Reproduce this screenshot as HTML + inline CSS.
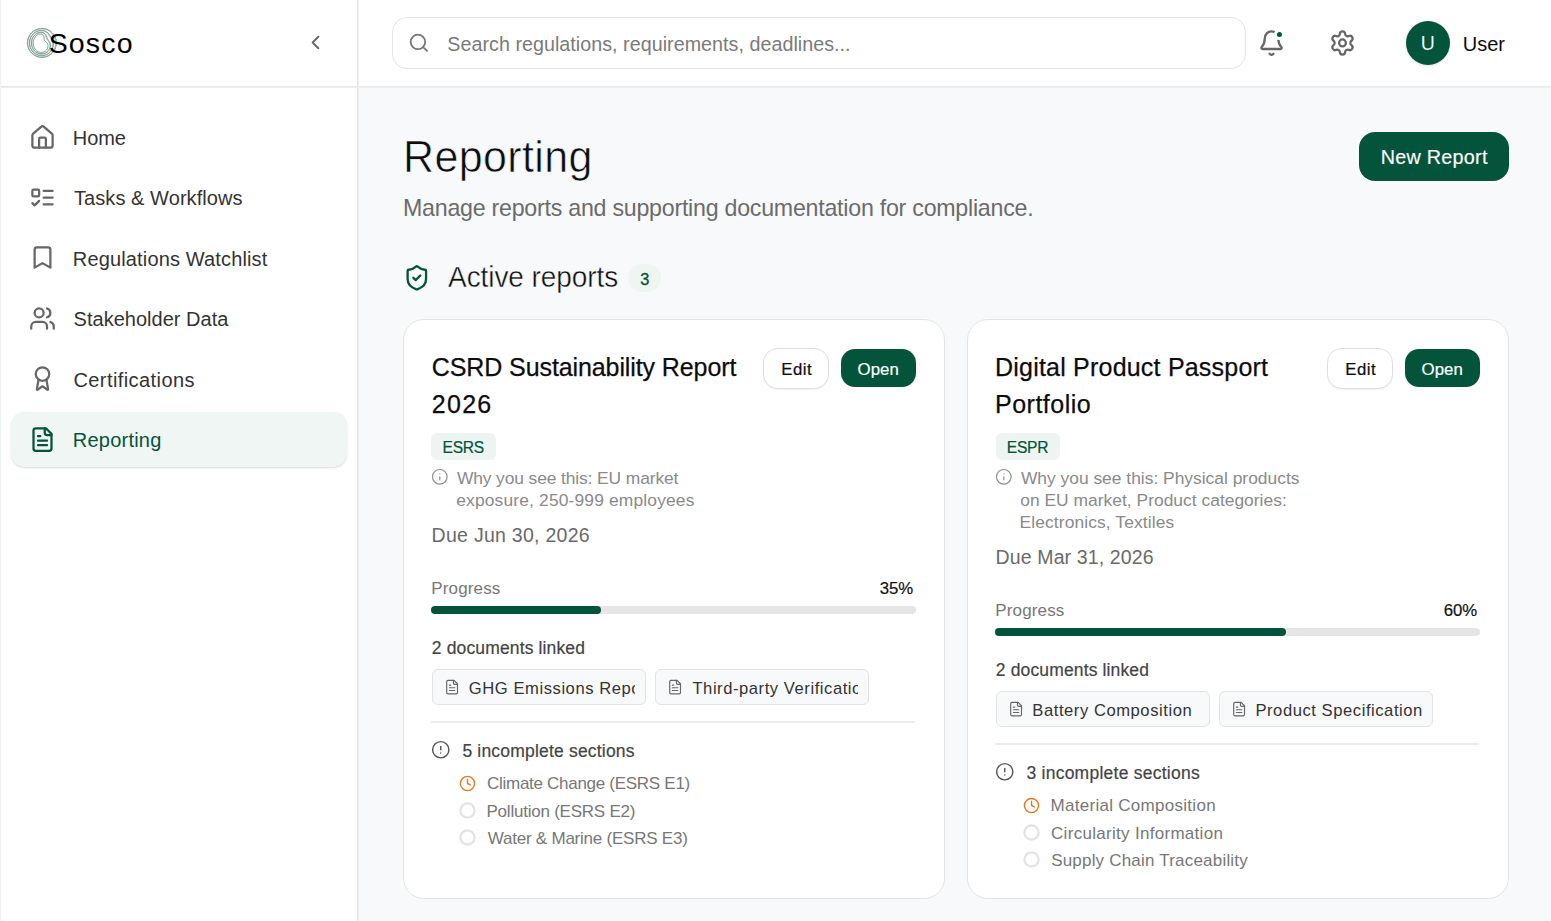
<!DOCTYPE html>
<html><head><meta charset="utf-8"><title>Reporting</title>
<style>
html,body{margin:0;padding:0;}
body{width:1551px;height:921px;overflow:hidden;position:relative;font-family:"Liberation Sans",sans-serif;background:#f8f9fb;}
.t{position:absolute;white-space:nowrap;}
.b{position:absolute;}
.i{position:absolute;overflow:visible;}
.b .t, .b .i{position:absolute;}
</style></head><body>
<div class="b" style="left:0px;top:0px;width:1551px;height:921px;background:#f8f9fb"></div>
<div class="b" style="left:0px;top:0px;width:357px;height:921px;background:#ffffff"></div>
<div class="b" style="left:358px;top:0px;width:1193px;height:86px;background:#ffffff"></div>
<div class="b" style="left:357px;top:0px;width:1px;height:921px;background:#e6e6e4"></div>
<div class="b" style="left:358px;top:0px;width:1px;height:86px;background:#eef2f0"></div>
<div class="b" style="left:358px;top:88px;width:1px;height:833px;background:#eeeeed"></div>
<div class="b" style="left:0px;top:86px;width:1551px;height:1px;background:#e8e8e6"></div>
<div class="b" style="left:0px;top:87px;width:1551px;height:1px;background:#eeeeec"></div>
<div class="b" style="left:0px;top:0px;width:1px;height:921px;background:#eef3f1"></div>
<svg class="i" style="left:26px;top:26px" width="32" height="32" viewBox="0 0 32 32" fill="none" stroke-width="0.7" stroke-linejoin="round"><path d="M30.40 16.90 L30.34 18.16 L30.18 19.42 L29.91 20.65 L29.53 21.86 L29.04 23.03 L28.46 24.15 L27.78 25.22 L27.01 26.22 L26.15 27.15 L25.22 28.01 L24.22 28.78 L23.15 29.46 L22.03 30.04 L20.86 30.53 L19.65 30.91 L18.42 31.18 L17.16 31.34 L15.90 31.40 L14.64 31.34 L13.38 31.18 L12.15 30.91 L10.94 30.53 L9.77 30.04 L8.65 29.46 L7.58 28.78 L6.58 28.01 L5.65 27.15 L4.79 26.22 L4.02 25.22 L3.34 24.15 L2.76 23.03 L2.27 21.86 L1.89 20.65 L1.62 19.42 L1.46 18.16 L1.40 16.90 L1.46 15.64 L1.62 14.38 L1.89 13.15 L2.27 11.94 L2.76 10.77 L3.34 9.65 L4.02 8.58 L4.79 7.58 L5.65 6.65 L6.58 5.79 L7.58 5.02 L8.65 4.34 L9.77 3.76 L10.94 3.27 L12.15 2.89 L13.38 2.62 L14.64 2.46 L15.90 2.40 L17.16 2.46 L18.42 2.62 L19.65 2.89 L20.86 3.27 L22.03 3.76 L23.15 4.34 L24.22 5.02 L25.22 5.79 L26.15 6.65 L27.01 7.58 L27.78 8.58 L28.46 9.65 L29.04 10.77 L29.53 11.94 L29.91 13.15 L30.18 14.38 L30.34 15.64Z" stroke="#2f7d62"/><path d="M29.75 16.91 L29.73 18.14 L29.59 19.37 L29.35 20.57 L29.00 21.76 L28.54 22.91 L27.98 24.01 L27.33 25.06 L26.58 26.04 L25.75 26.95 L24.84 27.79 L23.87 28.53 L22.83 29.19 L21.74 29.75 L20.61 30.22 L19.44 30.58 L18.24 30.84 L17.03 31.00 L15.81 31.05 L14.59 30.99 L13.38 30.83 L12.19 30.56 L11.02 30.19 L9.89 29.71 L8.81 29.14 L7.78 28.48 L6.81 27.73 L5.91 26.90 L5.08 25.99 L4.34 25.01 L3.69 23.98 L3.12 22.88 L2.65 21.74 L2.29 20.57 L2.02 19.37 L1.86 18.14 L1.81 16.91 L1.86 15.68 L2.02 14.46 L2.29 13.26 L2.65 12.08 L3.12 10.95 L3.69 9.85 L4.34 8.81 L5.08 7.84 L5.91 6.93 L6.81 6.10 L7.78 5.35 L8.81 4.68 L9.89 4.12 L11.02 3.64 L12.19 3.27 L13.38 3.01 L14.59 2.85 L15.81 2.80 L17.03 2.85 L18.24 3.02 L19.43 3.30 L20.59 3.68 L21.70 4.17 L22.77 4.76 L23.78 5.45 L24.72 6.22 L25.59 7.07 L26.39 7.99 L27.11 8.96 L27.75 9.99 L28.31 11.05 L28.79 12.16 L29.18 13.31 L29.47 14.49 L29.67 15.69Z" stroke="#8f9893"/><path d="M27.25 16.97 L27.35 18.06 L27.33 19.17 L27.20 20.27 L26.95 21.37 L26.60 22.44 L26.14 23.46 L25.58 24.44 L24.93 25.34 L24.20 26.18 L23.39 26.93 L22.52 27.59 L21.60 28.16 L20.63 28.64 L19.63 29.03 L18.61 29.33 L17.57 29.53 L16.51 29.65 L15.46 29.68 L14.40 29.61 L13.36 29.46 L12.33 29.21 L11.33 28.87 L10.36 28.45 L9.42 27.94 L8.54 27.34 L7.70 26.67 L6.92 25.92 L6.21 25.11 L5.57 24.23 L5.01 23.30 L4.52 22.32 L4.12 21.30 L3.80 20.25 L3.57 19.17 L3.43 18.07 L3.39 16.97 L3.43 15.86 L3.57 14.77 L3.80 13.69 L4.12 12.64 L4.52 11.62 L5.01 10.64 L5.57 9.70 L6.21 8.83 L6.92 8.01 L7.70 7.27 L8.54 6.59 L9.42 6.00 L10.36 5.49 L11.33 5.07 L12.33 4.74 L13.36 4.50 L14.41 4.36 L15.46 4.32 L16.51 4.38 L17.55 4.56 L18.56 4.84 L19.53 5.24 L20.46 5.76 L21.32 6.38 L22.10 7.09 L22.80 7.88 L23.43 8.71 L23.99 9.57 L24.51 10.43 L25.01 11.28 L25.48 12.14 L25.94 13.02 L26.37 13.94 L26.74 14.90 L27.05 15.91Z" stroke="#2f7d62"/><path d="M26.61 16.98 L26.74 18.04 L26.75 19.11 L26.64 20.20 L26.42 21.27 L26.09 22.31 L25.66 23.32 L25.13 24.28 L24.50 25.16 L23.80 25.98 L23.02 26.71 L22.17 27.35 L21.28 27.90 L20.35 28.36 L19.38 28.72 L18.39 29.00 L17.39 29.20 L16.38 29.30 L15.37 29.32 L14.36 29.26 L13.36 29.10 L12.37 28.86 L11.41 28.53 L10.48 28.12 L9.58 27.62 L8.73 27.05 L7.93 26.39 L7.19 25.67 L6.50 24.88 L5.89 24.03 L5.35 23.13 L4.88 22.17 L4.50 21.18 L4.19 20.16 L3.97 19.12 L3.84 18.05 L3.80 16.98 L3.84 15.91 L3.97 14.85 L4.19 13.80 L4.50 12.78 L4.88 11.79 L5.35 10.84 L5.89 9.94 L6.51 9.08 L7.19 8.29 L7.93 7.57 L8.73 6.92 L9.58 6.34 L10.48 5.85 L11.41 5.44 L12.37 5.12 L13.36 4.89 L14.36 4.75 L15.37 4.72 L16.37 4.78 L17.37 4.96 L18.33 5.24 L19.26 5.65 L20.14 6.17 L20.94 6.80 L21.66 7.52 L22.30 8.31 L22.87 9.14 L23.37 9.98 L23.84 10.80 L24.29 11.62 L24.75 12.43 L25.20 13.25 L25.64 14.10 L26.04 15.01 L26.37 15.97Z" stroke="#8f9893"/><path d="M24.11 17.04 L24.36 17.95 L24.49 18.91 L24.50 19.89 L24.38 20.88 L24.15 21.84 L23.82 22.77 L23.38 23.66 L22.85 24.47 L22.24 25.20 L21.56 25.85 L20.83 26.41 L20.05 26.87 L19.24 27.25 L18.41 27.54 L17.57 27.75 L16.72 27.89 L15.87 27.96 L15.02 27.95 L14.17 27.88 L13.34 27.73 L12.52 27.52 L11.72 27.22 L10.94 26.86 L10.20 26.42 L9.49 25.91 L8.82 25.33 L8.20 24.69 L7.63 24.00 L7.12 23.25 L6.67 22.45 L6.28 21.61 L5.96 20.74 L5.71 19.84 L5.52 18.92 L5.41 17.98 L5.38 17.04 L5.41 16.09 L5.52 15.16 L5.71 14.23 L5.96 13.33 L6.28 12.46 L6.67 11.62 L7.12 10.83 L7.63 10.08 L8.20 9.38 L8.82 8.74 L9.49 8.17 L10.20 7.66 L10.94 7.22 L11.72 6.86 L12.52 6.58 L13.34 6.38 L14.18 6.26 L15.02 6.24 L15.85 6.31 L16.67 6.49 L17.46 6.79 L18.21 7.21 L18.89 7.75 L19.48 8.41 L19.98 9.16 L20.38 9.96 L20.70 10.78 L20.98 11.55 L21.25 12.27 L21.55 12.92 L21.92 13.52 L22.35 14.11 L22.83 14.73 L23.31 15.42 L23.75 16.19Z" stroke="#2f7d62"/><path d="M23.46 17.05 L23.74 17.93 L23.90 18.86 L23.94 19.82 L23.85 20.78 L23.65 21.72 L23.34 22.63 L22.93 23.49 L22.43 24.29 L21.84 25.00 L21.19 25.63 L20.48 26.16 L19.73 26.61 L18.95 26.96 L18.16 27.23 L17.35 27.42 L16.54 27.55 L15.73 27.61 L14.92 27.60 L14.12 27.52 L13.33 27.38 L12.56 27.17 L11.80 26.88 L11.06 26.53 L10.35 26.10 L9.68 25.61 L9.05 25.06 L8.46 24.44 L7.93 23.77 L7.44 23.04 L7.01 22.28 L6.64 21.47 L6.34 20.62 L6.10 19.75 L5.93 18.86 L5.82 17.96 L5.79 17.05 L5.82 16.14 L5.93 15.24 L6.10 14.35 L6.34 13.48 L6.64 12.63 L7.01 11.83 L7.44 11.06 L7.93 10.33 L8.46 9.66 L9.05 9.04 L9.68 8.49 L10.36 8.00 L11.06 7.58 L11.80 7.23 L12.56 6.96 L13.34 6.77 L14.13 6.66 L14.92 6.64 L15.72 6.71 L16.49 6.89 L17.24 7.19 L17.94 7.61 L18.57 8.16 L19.11 8.83 L19.55 9.59 L19.88 10.39 L20.14 11.20 L20.36 11.96 L20.58 12.65 L20.84 13.25 L21.19 13.80 L21.61 14.33 L22.10 14.89 L22.60 15.52 L23.07 16.24Z" stroke="#8f9893"/><path d="M21.15 17.10 L21.54 17.85 L21.81 18.67 L21.95 19.54 L21.96 20.42 L21.85 21.29 L21.63 22.13 L21.31 22.92 L20.90 23.65 L20.41 24.29 L19.84 24.84 L19.23 25.29 L18.59 25.65 L17.93 25.93 L17.25 26.13 L16.58 26.26 L15.92 26.34 L15.25 26.36 L14.60 26.33 L13.95 26.25 L13.32 26.11 L12.69 25.92 L12.08 25.67 L11.49 25.36 L10.92 24.99 L10.38 24.56 L9.87 24.07 L9.40 23.54 L8.97 22.95 L8.58 22.32 L8.23 21.65 L7.94 20.95 L7.69 20.21 L7.50 19.46 L7.36 18.68 L7.28 17.89 L7.25 17.10 L7.28 16.31 L7.36 15.52 L7.50 14.74 L7.69 13.99 L7.94 13.25 L8.23 12.55 L8.58 11.88 L8.97 11.25 L9.40 10.67 L9.88 10.13 L10.38 9.65 L10.93 9.22 L11.49 8.85 L12.09 8.55 L12.70 8.31 L13.33 8.15 L13.96 8.06 L14.60 8.05 L15.23 8.13 L15.85 8.32 L16.43 8.62 L16.96 9.06 L17.41 9.63 L17.76 10.32 L17.99 11.11 L18.11 11.93 L18.14 12.72 L18.14 13.42 L18.17 14.00 L18.30 14.45 L18.57 14.81 L18.98 15.13 L19.50 15.47 L20.08 15.90 L20.64 16.45Z" stroke="#2f7d62"/></svg>
<div class="t" style="left:48.71px;top:25.02px;font-size:28.5px;line-height:36px;color:#000000;letter-spacing:1.141px;font-weight:normal;font-weight:normal">Sosco</div>
<svg class="i" style="left:304.00px;top:30.90px;" width="23" height="23" viewBox="0 0 24 24" preserveAspectRatio="none" fill="none" stroke="#666666" stroke-width="1.9" stroke-linecap="round" stroke-linejoin="round"><path d="m15 18-6-6 6-6"/></svg>
<svg class="i" style="left:28.70px;top:124.00px;" width="27" height="27" viewBox="0 0 24 24" preserveAspectRatio="none" fill="none" stroke="#666666" stroke-width="2" stroke-linecap="round" stroke-linejoin="round"><path d="M15 21v-8a1 1 0 0 0-1-1h-4a1 1 0 0 0-1 1v8"/><path d="M3 10a2 2 0 0 1 .709-1.528l7-5.999a2 2 0 0 1 2.582 0l7 5.999A2 2 0 0 1 21 10v9a2 2 0 0 1-2 2H5a2 2 0 0 1-2-2z"/></svg>
<div class="t" style="left:72.86px;top:125.77px;font-size:20px;line-height:25px;color:#333333;letter-spacing:-0.136px;font-weight:normal;">Home</div>
<svg class="i" style="left:28.70px;top:183.88px;" width="27" height="27" viewBox="0 0 24 24" preserveAspectRatio="none" fill="none" stroke="#666666" stroke-width="2" stroke-linecap="round" stroke-linejoin="round"><rect x="3" y="5" width="6" height="6" rx="1"/><path d="m3 17 2 2 4-4"/><path d="M13 6h8"/><path d="M13 12h8"/><path d="M13 18h8"/></svg>
<div class="t" style="left:74.05px;top:186.22px;font-size:20px;line-height:25px;color:#333333;letter-spacing:0.062px;font-weight:normal;">Tasks &amp; Workflows</div>
<svg class="i" style="left:28.70px;top:244.36px;" width="27" height="27" viewBox="0 0 24 24" preserveAspectRatio="none" fill="none" stroke="#666666" stroke-width="2" stroke-linecap="round" stroke-linejoin="round"><path d="m19 21-7-4-7 4V5a2 2 0 0 1 2-2h10a2 2 0 0 1 2 2v16z"/></svg>
<div class="t" style="left:72.86px;top:246.67px;font-size:20px;line-height:25px;color:#333333;letter-spacing:0.145px;font-weight:normal;">Regulations Watchlist</div>
<svg class="i" style="left:28.70px;top:304.84px;" width="27" height="27" viewBox="0 0 24 24" preserveAspectRatio="none" fill="none" stroke="#666666" stroke-width="2" stroke-linecap="round" stroke-linejoin="round"><path d="M16 21v-2a4 4 0 0 0-4-4H6a4 4 0 0 0-4 4v2"/><circle cx="9" cy="7" r="4"/><path d="M22 21v-2a4 4 0 0 0-3-3.87"/><path d="M16 3.13a4 4 0 0 1 0 7.75"/></svg>
<div class="t" style="left:73.59px;top:307.12px;font-size:20px;line-height:25px;color:#333333;letter-spacing:0.017px;font-weight:normal;">Stakeholder Data</div>
<svg class="i" style="left:28.70px;top:365.32px;" width="27" height="27" viewBox="0 0 24 24" preserveAspectRatio="none" fill="none" stroke="#666666" stroke-width="2" stroke-linecap="round" stroke-linejoin="round"><path d="m15.477 12.89 1.515 8.526a.5.5 0 0 1-.81.47l-3.58-2.687a1 1 0 0 0-1.197 0l-3.586 2.686a.5.5 0 0 1-.81-.469l1.514-8.526"/><circle cx="12" cy="8" r="6"/></svg>
<div class="t" style="left:73.48px;top:367.57px;font-size:20px;line-height:25px;color:#333333;letter-spacing:0.417px;font-weight:normal;">Certifications</div>
<div class="b" style="left:11px;top:412px;width:336px;height:55px;background:#f0f6f3;border-radius:14px;box-shadow:0 1px 2px rgba(0,0,0,0.13),0 0 1px rgba(0,0,0,0.06)"></div>
<svg class="i" style="left:28.70px;top:425.80px;" width="27" height="27" viewBox="0 0 24 24" preserveAspectRatio="none" fill="none" stroke="#03543b" stroke-width="2" stroke-linecap="round" stroke-linejoin="round"><path d="M15 2H6a2 2 0 0 0-2 2v16a2 2 0 0 0 2 2h12a2 2 0 0 0 2-2V7Z"/><path d="M14 2v4a2 2 0 0 0 2 2h4"/><path d="M10 9H8"/><path d="M16 13H8"/><path d="M16 17H8"/></svg>
<div class="t" style="left:72.86px;top:428.02px;font-size:20px;line-height:25px;color:#03543b;letter-spacing:0.218px;font-weight:normal;">Reporting</div>
<div class="b" style="left:392px;top:17px;width:854px;height:52px;background:#fff;border:1px solid #e3e4e3;border-radius:15px;box-sizing:border-box"></div>
<svg class="i" style="left:408.10px;top:32.05px;" width="21.7" height="21.7" viewBox="0 0 24 24" preserveAspectRatio="none" fill="none" stroke="#757575" stroke-width="2" stroke-linecap="round" stroke-linejoin="round"><path d="m21 21-4.34-4.34"/><circle cx="11" cy="11" r="8"/></svg>
<div class="t" style="left:447.31px;top:31.67px;font-size:19.7px;line-height:25px;color:#7a7a7a;letter-spacing:0.036px;font-weight:normal;">Search regulations, requirements, deadlines...</div>
<svg class="i" style="left:1257.75px;top:29.10px;" width="27" height="28.2" viewBox="0 0 24 24" preserveAspectRatio="none" fill="none" stroke="#666666" stroke-width="2" stroke-linecap="round" stroke-linejoin="round"><path d="M10.268 21a2 2 0 0 0 3.464 0"/><path d="M3.262 15.326A1 1 0 0 0 4 17h16a1 1 0 0 0 .74-1.673C19.41 13.956 18 12.499 18 8A6 6 0 0 0 6 8c0 4.499-1.411 5.956-2.738 7.326"/></svg>
<div class="b" style="left:1276.9px;top:31.9px;width:5.399999999999864px;height:5.399999999999999px;background:#03543b;border:3px solid #fff;border-radius:50%;box-sizing:content-box;left:1273.9px;top:28.9px"></div>
<svg class="i" style="left:1329.10px;top:29.10px;" width="27" height="27.9" viewBox="0 0 24 24" preserveAspectRatio="none" fill="none" stroke="#666666" stroke-width="2" stroke-linecap="round" stroke-linejoin="round"><path d="M9.671 4.136a2.34 2.34 0 0 1 4.659 0 2.34 2.34 0 0 0 3.319 1.915 2.34 2.34 0 0 1 2.33 4.033 2.34 2.34 0 0 0 0 3.831 2.34 2.34 0 0 1-2.33 4.033 2.34 2.34 0 0 0-3.319 1.915 2.34 2.34 0 0 1-4.659 0 2.34 2.34 0 0 0-3.32-1.915 2.34 2.34 0 0 1-2.33-4.033 2.34 2.34 0 0 0 0-3.831A2.34 2.34 0 0 1 6.35 6.051a2.34 2.34 0 0 0 3.319-1.915"/><circle cx="12" cy="12" r="3"/></svg>
<div class="b" style="left:1406px;top:21px;width:44px;height:44px;background:#03543b;border-radius:50%;box-shadow:0 1px 3px rgba(0,0,0,0.12)"></div>
<div class="t" style="left:1420.70px;top:31.14px;font-size:19.5px;line-height:24px;color:#ffffff;letter-spacing:0.000px;font-weight:normal;-webkit-text-stroke:0.1px #03543b">U</div>
<div class="t" style="left:1462.86px;top:31.97px;font-size:20px;line-height:25px;color:#0d0d0d;letter-spacing:-0.036px;font-weight:normal;">User</div>
<div class="t" style="left:402.97px;top:129.59px;font-size:43px;line-height:54px;color:#0d0d0d;letter-spacing:0.390px;font-weight:normal;-webkit-text-stroke:0.6px #f8f9fb;transform-origin:0 41.91px;transform:scaleY(1.035)">Reporting</div>
<div class="t" style="left:403.00px;top:193.66px;font-size:23.2px;line-height:29px;color:#6b6b6b;letter-spacing:-0.239px;font-weight:normal;">Manage reports and supporting documentation for compliance.</div>
<div class="b" style="left:1358.5px;top:131.6px;width:150.5px;height:49.400000000000006px;background:#03543b;border-radius:16px"></div>
<div class="t" style="left:1380.68px;top:144.54px;font-size:19.8px;line-height:25px;color:#ffffff;letter-spacing:0.253px;font-weight:normal;-webkit-text-stroke:0.15px #fff">New Report</div>
<svg class="i" style="left:402.60px;top:264.20px;" width="27.7" height="27.7" viewBox="0 0 24 24" preserveAspectRatio="none" fill="none" stroke="#03543b" stroke-width="2" stroke-linecap="round" stroke-linejoin="round"><path d="M20 13c0 5-3.5 7.5-7.66 8.95a1 1 0 0 1-.67-.01C7.5 20.5 4 18 4 13V6a1 1 0 0 1 1-1c2 0 4.5-1.2 6.24-2.72a1.17 1.17 0 0 1 1.52 0C14.51 3.81 17 5 19 5a1 1 0 0 1 1 1z"/><path d="m9 12 2 2 4-4"/></svg>
<div class="t" style="left:448.05px;top:259.69px;font-size:28px;line-height:35px;color:#0d0d0d;letter-spacing:-0.084px;font-weight:normal;-webkit-text-stroke:0.4px #f8f9fb;transform-origin:0 27.21px;transform:scaleY(1.035)">Active reports</div>
<div class="b" style="left:628px;top:264px;width:33px;height:28px;background:#eff5f1;border-radius:14px"></div>
<div class="t" style="left:640.24px;top:268.51px;font-size:16.4px;line-height:20px;color:#03543b;letter-spacing:0.000px;font-weight:normal;-webkit-text-stroke:0.3px #03543b">3</div>
<div class="b" style="left:403px;top:319px;width:542px;height:580px;background:#fff;border:1px solid #e3e4e3;border-radius:21px;box-sizing:border-box"></div>
<div class="t" style="left:431.83px;top:351.63px;font-size:25px;line-height:31px;color:#0d0d0d;letter-spacing:-0.100px;font-weight:normal;-webkit-text-stroke:0.25px #0d0d0d">CSRD Sustainability Report</div>
<div class="t" style="left:431.84px;top:388.63px;font-size:25px;line-height:31px;color:#0d0d0d;letter-spacing:1.277px;font-weight:normal;-webkit-text-stroke:0.25px #0d0d0d">2026</div>
<div class="b" style="left:763.3px;top:347.5px;width:65.70000000000005px;height:41.0px;background:#fff;border:1px solid #dcdddc;border-radius:14.5px;box-sizing:border-box;box-shadow:0 1px 1px rgba(0,0,0,0.04)"></div>
<div class="t" style="left:781.32px;top:358.58px;font-size:16.8px;line-height:21px;color:#0d0d0d;letter-spacing:0.447px;font-weight:normal;-webkit-text-stroke:0.2px #0d0d0d">Edit</div>
<div class="b" style="left:840.5px;top:348.8px;width:75.5px;height:38.39999999999998px;background:#03543b;border-radius:14px"></div>
<div class="t" style="left:857.50px;top:358.58px;font-size:16.8px;line-height:21px;color:#ffffff;letter-spacing:0.093px;font-weight:normal;-webkit-text-stroke:0.2px #fff">Open</div>
<div class="b" style="left:431.2px;top:433px;width:64.5px;height:27px;background:#eef4f1;border-radius:6px"></div>
<div class="t" style="left:442.57px;top:437.99px;font-size:15.6px;line-height:20px;color:#03543b;letter-spacing:-0.330px;font-weight:normal;-webkit-text-stroke:0.2px #03543b">ESRS</div>
<svg class="i" style="left:430.60px;top:468.10px;" width="17.6" height="17.6" viewBox="0 0 24 24" preserveAspectRatio="none" fill="none" stroke="#8f8f8f" stroke-width="1.6" stroke-linecap="round" stroke-linejoin="round"><circle cx="12" cy="12" r="10"/><path d="M12 16v-4"/><path d="M12 8h.01"/></svg>
<div class="t" style="left:456.92px;top:466.87px;font-size:17.4px;line-height:22px;color:#8a8a8a;letter-spacing:-0.106px;font-weight:normal;">Why you see this: EU market</div>
<div class="t" style="left:456.26px;top:488.82px;font-size:17.4px;line-height:22px;color:#8a8a8a;letter-spacing:0.160px;font-weight:normal;">exposure, 250-999 employees</div>
<div class="t" style="left:431.60px;top:523.14px;font-size:19.5px;line-height:24px;color:#6a6a6a;letter-spacing:0.276px;font-weight:normal;">Due Jun 30, 2026</div>
<div class="t" style="left:431.31px;top:577.71px;font-size:17px;line-height:21px;color:#777777;letter-spacing:0.136px;font-weight:normal;">Progress</div>
<div class="t" style="left:879.66px;top:578.18px;font-size:16.8px;line-height:21px;color:#111111;letter-spacing:0.000px;font-weight:normal;-webkit-text-stroke:0.2px #111">35%</div>
<div class="b" style="left:431.4px;top:606px;width:484.9px;height:8px;background:#e5e5e5;border-radius:4px"></div>
<div class="b" style="left:431.4px;top:606px;width:169.71500000000003px;height:8px;background:#03543b;border-radius:4px"></div>
<div class="t" style="left:431.82px;top:636.83px;font-size:17.5px;line-height:22px;color:#444444;letter-spacing:0.140px;font-weight:normal;-webkit-text-stroke:0.2px #444">2 documents linked</div>
<div class="b" style="left:431.50px;top:669.40px;width:214px;height:35.3px;background:#f8f9fa;border:1px solid #e2e3e2;border-radius:6px;box-sizing:border-box"></div>
<svg class="i" style="left:444.10px;top:678.80px;" width="16.2" height="16.2" viewBox="0 0 24 24" preserveAspectRatio="none" fill="none" stroke="#666" stroke-width="1.7" stroke-linecap="round" stroke-linejoin="round"><path d="M15 2H6a2 2 0 0 0-2 2v16a2 2 0 0 0 2 2h12a2 2 0 0 0 2-2V7Z"/><path d="M14 2v4a2 2 0 0 0 2 2h4"/><path d="M10 9H8"/><path d="M16 13H8"/><path d="M16 17H8"/></svg>
<div class="b" style="left:431.50px;top:669.40px;width:203px;height:35px;overflow:hidden"><div class="t" style="left:37.37px;top:8.45px;font-size:16.6px;line-height:21px;color:#333333;letter-spacing:0.550px;font-weight:normal;">GHG Emissions Report</div></div>
<div class="b" style="left:654.60px;top:669.40px;width:214px;height:35.3px;background:#f8f9fa;border:1px solid #e2e3e2;border-radius:6px;box-sizing:border-box"></div>
<svg class="i" style="left:667.20px;top:678.80px;" width="16.2" height="16.2" viewBox="0 0 24 24" preserveAspectRatio="none" fill="none" stroke="#666" stroke-width="1.7" stroke-linecap="round" stroke-linejoin="round"><path d="M15 2H6a2 2 0 0 0-2 2v16a2 2 0 0 0 2 2h12a2 2 0 0 0 2-2V7Z"/><path d="M14 2v4a2 2 0 0 0 2 2h4"/><path d="M10 9H8"/><path d="M16 13H8"/><path d="M16 17H8"/></svg>
<div class="b" style="left:654.60px;top:669.40px;width:203px;height:35px;overflow:hidden"><div class="t" style="left:37.83px;top:8.45px;font-size:16.6px;line-height:21px;color:#333333;letter-spacing:0.550px;font-weight:normal;">Third-party Verification</div></div>
<div class="b" style="left:431.4px;top:721px;width:484.1px;height:2px;background:#ebebeb"></div>
<svg class="i" style="left:431.15px;top:740.35px;" width="19.5" height="19.5" viewBox="0 0 24 24" preserveAspectRatio="none" fill="none" stroke="#555555" stroke-width="1.8" stroke-linecap="round" stroke-linejoin="round"><circle cx="12" cy="12" r="10"/><line x1="12" x2="12" y1="8" y2="12"/><line x1="12" x2="12.01" y1="16" y2="16"/></svg>
<div class="t" style="left:462.40px;top:739.93px;font-size:17.5px;line-height:22px;color:#444444;letter-spacing:0.190px;font-weight:normal;-webkit-text-stroke:0.2px #444">5 incomplete sections</div>
<svg class="i" style="left:458.80px;top:775.00px;" width="17" height="17" viewBox="0 0 24 24" preserveAspectRatio="none" fill="none" stroke="#e07b24" stroke-width="2" stroke-linecap="round" stroke-linejoin="round"><circle cx="12" cy="12" r="10"/><path d="M12 6v6l4 2"/></svg>
<div class="t" style="left:487.04px;top:773.21px;font-size:17px;line-height:21px;color:#777777;letter-spacing:-0.286px;font-weight:normal;">Climate Change (ESRS E1)</div>
<svg class="i" style="left:458.60px;top:801.95px;" width="17" height="17" viewBox="0 0 24 24" preserveAspectRatio="none" fill="none" stroke="#e3e3e3" stroke-width="3.2" stroke-linecap="round" stroke-linejoin="round"><circle cx="12" cy="12" r="10"/></svg>
<div class="t" style="left:486.51px;top:800.56px;font-size:17px;line-height:21px;color:#777777;letter-spacing:-0.227px;font-weight:normal;">Pollution (ESRS E2)</div>
<svg class="i" style="left:458.60px;top:829.30px;" width="17" height="17" viewBox="0 0 24 24" preserveAspectRatio="none" fill="none" stroke="#e3e3e3" stroke-width="3.2" stroke-linecap="round" stroke-linejoin="round"><circle cx="12" cy="12" r="10"/></svg>
<div class="t" style="left:487.83px;top:827.91px;font-size:17px;line-height:21px;color:#777777;letter-spacing:-0.232px;font-weight:normal;">Water &amp; Marine (ESRS E3)</div>
<div class="b" style="left:967px;top:319px;width:542px;height:580px;background:#fff;border:1px solid #e3e4e3;border-radius:21px;box-sizing:border-box"></div>
<div class="t" style="left:995.05px;top:351.63px;font-size:25px;line-height:31px;color:#0d0d0d;letter-spacing:0.207px;font-weight:normal;-webkit-text-stroke:0.25px #0d0d0d">Digital Product Passport</div>
<div class="t" style="left:995.05px;top:388.63px;font-size:25px;line-height:31px;color:#0d0d0d;letter-spacing:0.483px;font-weight:normal;-webkit-text-stroke:0.25px #0d0d0d">Portfolio</div>
<div class="b" style="left:1327.3px;top:347.5px;width:65.70000000000005px;height:41.0px;background:#fff;border:1px solid #dcdddc;border-radius:14.5px;box-sizing:border-box;box-shadow:0 1px 1px rgba(0,0,0,0.04)"></div>
<div class="t" style="left:1345.32px;top:358.58px;font-size:16.8px;line-height:21px;color:#0d0d0d;letter-spacing:0.447px;font-weight:normal;-webkit-text-stroke:0.2px #0d0d0d">Edit</div>
<div class="b" style="left:1404.5px;top:348.8px;width:75.5px;height:38.39999999999998px;background:#03543b;border-radius:14px"></div>
<div class="t" style="left:1421.50px;top:358.58px;font-size:16.8px;line-height:21px;color:#ffffff;letter-spacing:0.093px;font-weight:normal;-webkit-text-stroke:0.2px #fff">Open</div>
<div class="b" style="left:996px;top:433px;width:63.59999999999991px;height:27px;background:#eef4f1;border-radius:6px"></div>
<div class="t" style="left:1006.82px;top:437.99px;font-size:15.6px;line-height:20px;color:#03543b;letter-spacing:-0.264px;font-weight:normal;-webkit-text-stroke:0.2px #03543b">ESPR</div>
<svg class="i" style="left:994.60px;top:468.10px;" width="17.6" height="17.6" viewBox="0 0 24 24" preserveAspectRatio="none" fill="none" stroke="#8f8f8f" stroke-width="1.6" stroke-linecap="round" stroke-linejoin="round"><circle cx="12" cy="12" r="10"/><path d="M12 16v-4"/><path d="M12 8h.01"/></svg>
<div class="t" style="left:1020.92px;top:466.87px;font-size:17.4px;line-height:22px;color:#8a8a8a;letter-spacing:0.004px;font-weight:normal;">Why you see this: Physical products</div>
<div class="t" style="left:1020.27px;top:488.82px;font-size:17.4px;line-height:22px;color:#8a8a8a;letter-spacing:0.021px;font-weight:normal;">on EU market, Product categories:</div>
<div class="t" style="left:1019.57px;top:510.77px;font-size:17.4px;line-height:22px;color:#8a8a8a;letter-spacing:0.108px;font-weight:normal;">Electronics, Textiles</div>
<div class="t" style="left:995.60px;top:545.14px;font-size:19.5px;line-height:24px;color:#6a6a6a;letter-spacing:0.120px;font-weight:normal;">Due Mar 31, 2026</div>
<div class="t" style="left:995.31px;top:599.71px;font-size:17px;line-height:21px;color:#777777;letter-spacing:0.136px;font-weight:normal;">Progress</div>
<div class="t" style="left:1443.66px;top:600.18px;font-size:16.8px;line-height:21px;color:#111111;letter-spacing:0.000px;font-weight:normal;-webkit-text-stroke:0.2px #111">60%</div>
<div class="b" style="left:995.4px;top:628px;width:484.9px;height:8px;background:#e5e5e5;border-radius:4px"></div>
<div class="b" style="left:995.4px;top:628px;width:290.93999999999994px;height:8px;background:#03543b;border-radius:4px"></div>
<div class="t" style="left:995.82px;top:658.83px;font-size:17.5px;line-height:22px;color:#444444;letter-spacing:0.140px;font-weight:normal;-webkit-text-stroke:0.2px #444">2 documents linked</div>
<div class="b" style="left:995.50px;top:691.40px;width:214px;height:35.3px;background:#f8f9fa;border:1px solid #e2e3e2;border-radius:6px;box-sizing:border-box"></div>
<svg class="i" style="left:1008.10px;top:700.80px;" width="16.2" height="16.2" viewBox="0 0 24 24" preserveAspectRatio="none" fill="none" stroke="#666" stroke-width="1.7" stroke-linecap="round" stroke-linejoin="round"><path d="M15 2H6a2 2 0 0 0-2 2v16a2 2 0 0 0 2 2h12a2 2 0 0 0 2-2V7Z"/><path d="M14 2v4a2 2 0 0 0 2 2h4"/><path d="M10 9H8"/><path d="M16 13H8"/><path d="M16 17H8"/></svg>
<div class="b" style="left:995.50px;top:691.40px;width:203px;height:35px;overflow:hidden"><div class="t" style="left:36.84px;top:8.45px;font-size:16.6px;line-height:21px;color:#333333;letter-spacing:0.550px;font-weight:normal;">Battery Composition</div></div>
<div class="b" style="left:1218.60px;top:691.40px;width:214px;height:35.3px;background:#f8f9fa;border:1px solid #e2e3e2;border-radius:6px;box-sizing:border-box"></div>
<svg class="i" style="left:1231.20px;top:700.80px;" width="16.2" height="16.2" viewBox="0 0 24 24" preserveAspectRatio="none" fill="none" stroke="#666" stroke-width="1.7" stroke-linecap="round" stroke-linejoin="round"><path d="M15 2H6a2 2 0 0 0-2 2v16a2 2 0 0 0 2 2h12a2 2 0 0 0 2-2V7Z"/><path d="M14 2v4a2 2 0 0 0 2 2h4"/><path d="M10 9H8"/><path d="M16 13H8"/><path d="M16 17H8"/></svg>
<div class="b" style="left:1218.60px;top:691.40px;width:203px;height:35px;overflow:hidden"><div class="t" style="left:36.84px;top:8.45px;font-size:16.6px;line-height:21px;color:#333333;letter-spacing:0.550px;font-weight:normal;">Product Specification</div></div>
<div class="b" style="left:995.4px;top:743px;width:484.1px;height:2px;background:#ebebeb"></div>
<svg class="i" style="left:995.15px;top:762.35px;" width="19.5" height="19.5" viewBox="0 0 24 24" preserveAspectRatio="none" fill="none" stroke="#555555" stroke-width="1.8" stroke-linecap="round" stroke-linejoin="round"><circle cx="12" cy="12" r="10"/><line x1="12" x2="12" y1="8" y2="12"/><line x1="12" x2="12.01" y1="16" y2="16"/></svg>
<div class="t" style="left:1026.43px;top:761.93px;font-size:17.5px;line-height:22px;color:#444444;letter-spacing:0.248px;font-weight:normal;-webkit-text-stroke:0.2px #444">3 incomplete sections</div>
<svg class="i" style="left:1022.80px;top:797.00px;" width="17" height="17" viewBox="0 0 24 24" preserveAspectRatio="none" fill="none" stroke="#e07b24" stroke-width="2" stroke-linecap="round" stroke-linejoin="round"><circle cx="12" cy="12" r="10"/><path d="M12 6v6l4 2"/></svg>
<div class="t" style="left:1050.51px;top:795.21px;font-size:17px;line-height:21px;color:#777777;letter-spacing:0.285px;font-weight:normal;">Material Composition</div>
<svg class="i" style="left:1022.60px;top:823.95px;" width="17" height="17" viewBox="0 0 24 24" preserveAspectRatio="none" fill="none" stroke="#e3e3e3" stroke-width="3.2" stroke-linecap="round" stroke-linejoin="round"><circle cx="12" cy="12" r="10"/></svg>
<div class="t" style="left:1051.04px;top:822.56px;font-size:17px;line-height:21px;color:#777777;letter-spacing:0.297px;font-weight:normal;">Circularity Information</div>
<svg class="i" style="left:1022.60px;top:851.30px;" width="17" height="17" viewBox="0 0 24 24" preserveAspectRatio="none" fill="none" stroke="#e3e3e3" stroke-width="3.2" stroke-linecap="round" stroke-linejoin="round"><circle cx="12" cy="12" r="10"/></svg>
<div class="t" style="left:1051.13px;top:849.91px;font-size:17px;line-height:21px;color:#777777;letter-spacing:0.201px;font-weight:normal;">Supply Chain Traceability</div>
</body></html>
